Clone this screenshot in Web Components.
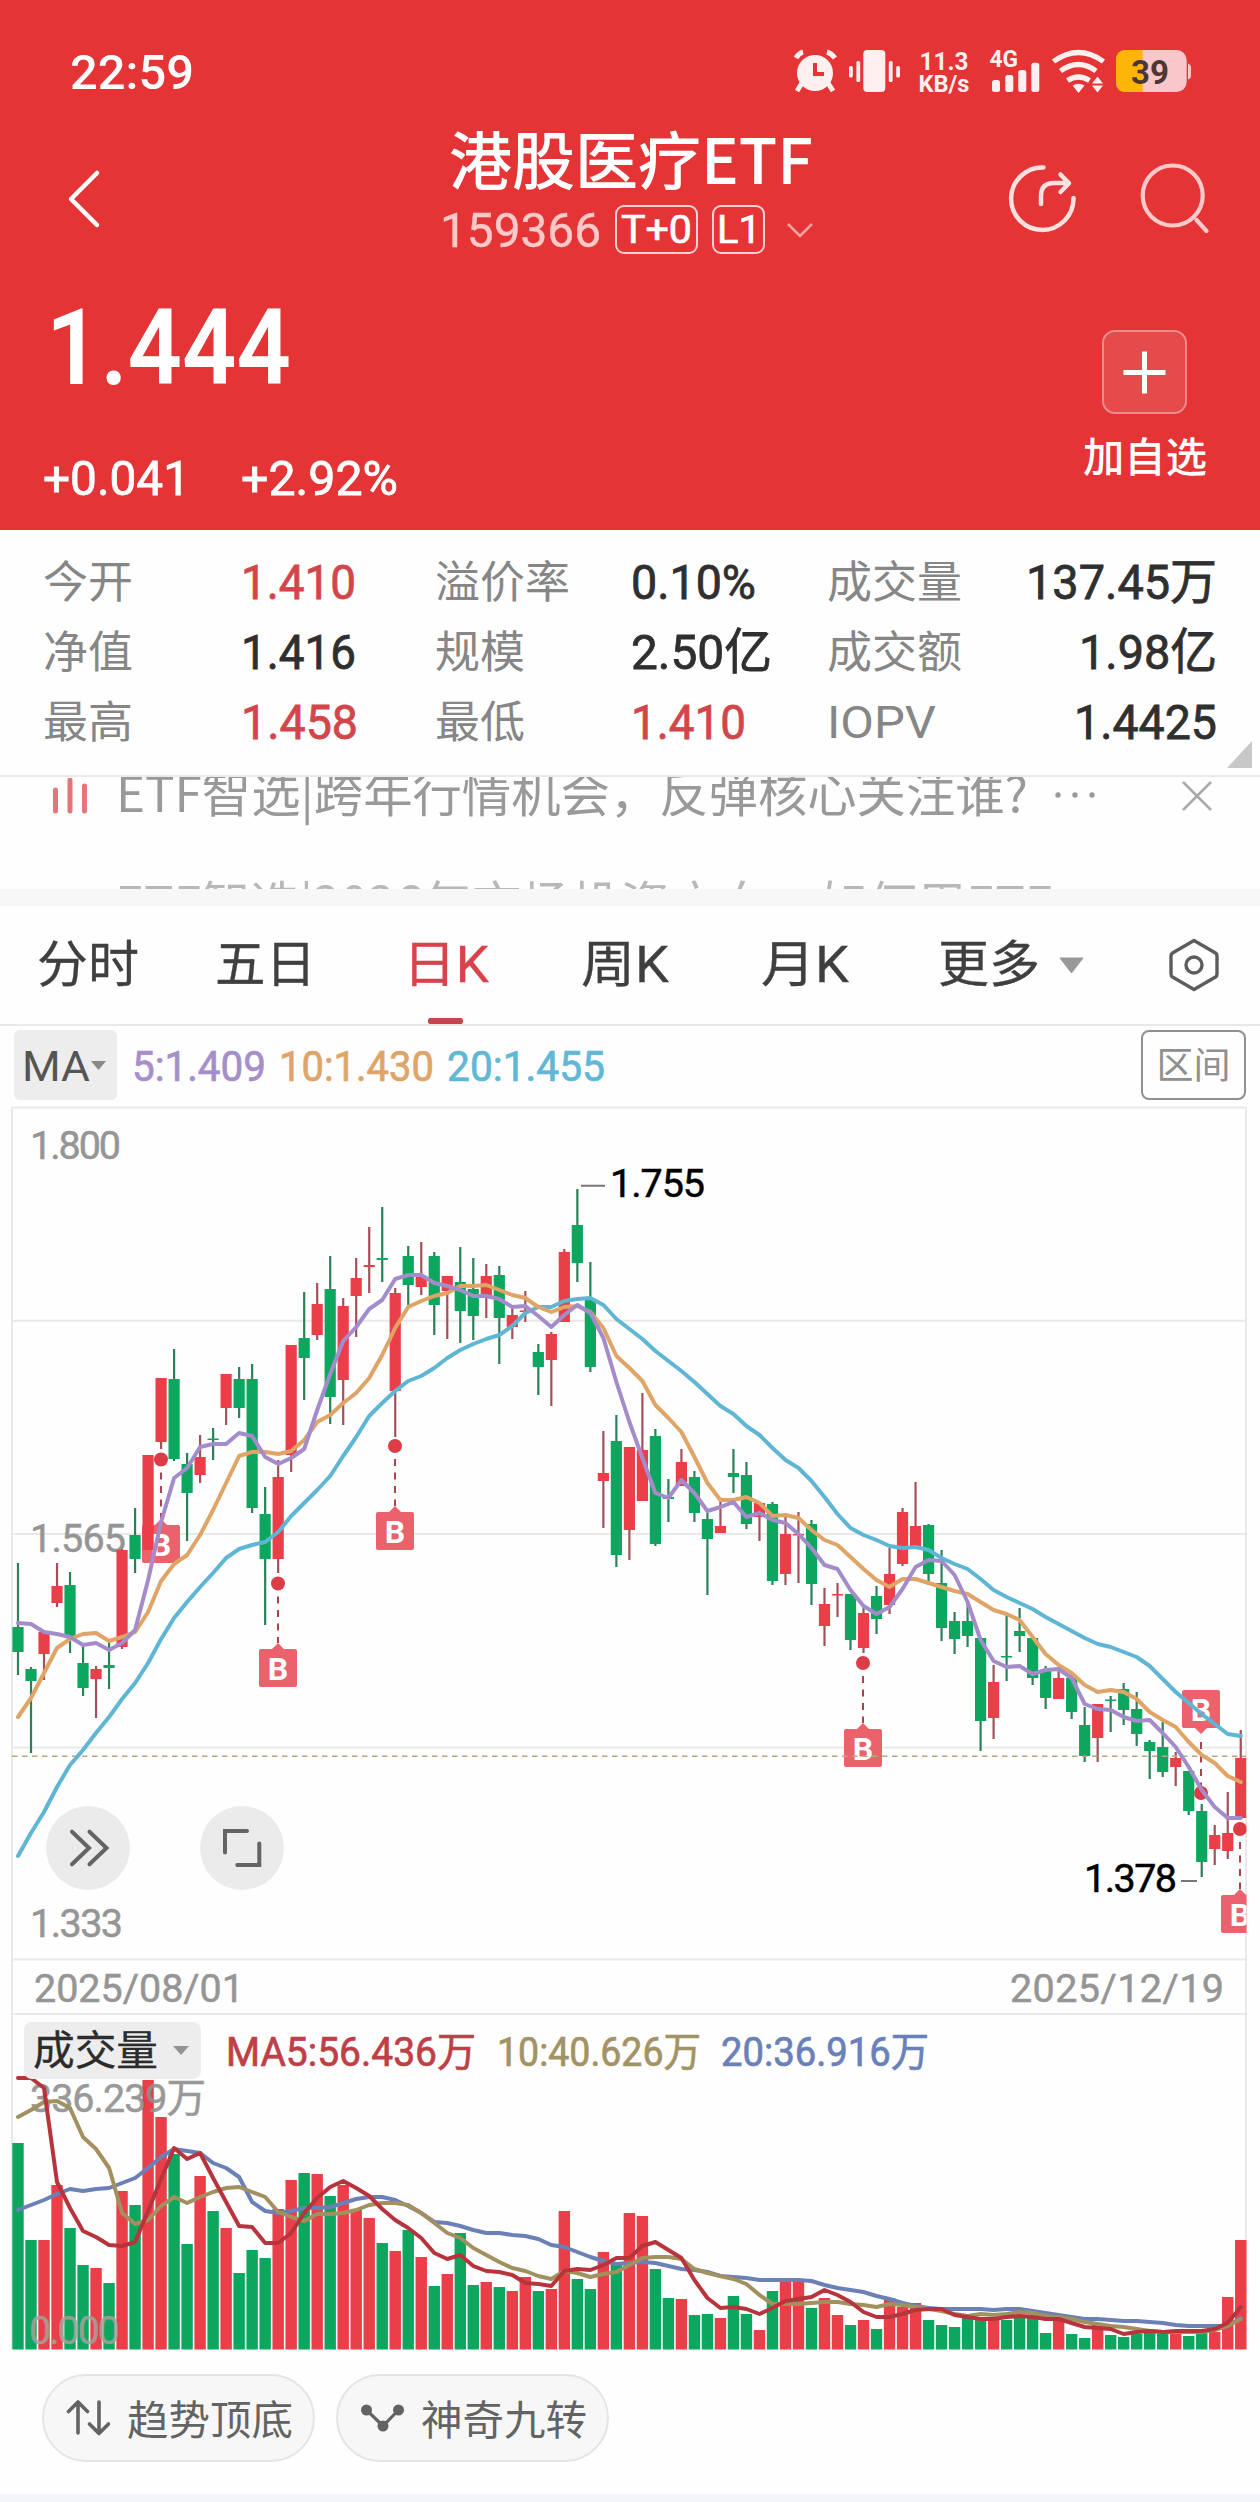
<!DOCTYPE html>
<html lang="zh-CN">
<head>
<meta charset="utf-8">
<title>港股医疗ETF 159366</title>
<style>
html,body{margin:0;padding:0}
body{width:1260px;height:2502px;overflow:hidden;background:#fefefe;font-family:Roboto,"Noto Sans CJK SC",sans-serif}
quote-page{--up:#ea3e48;--down:#0ca65f;--red:#d2464b;--ink:#2f2f2f;--mute:#868686;--line:#e9e9e9}
</style>
</head>
<body>
<quote-page></quote-page>
<script>
const define=(name,html,after)=>customElements.define(name,class extends HTMLElement{
  constructor(){super();this.attachShadow({mode:'open'});}
  connectedCallback(){this.shadowRoot.innerHTML=html;if(after)after.call(this,this.shadowRoot);}
});

/* One line of text scaled horizontally to the width given in "w". */
customElements.define('fit-text',class extends HTMLElement{
  constructor(){super();this.attachShadow({mode:'open'}).innerHTML=
   '<style>:host{display:block;flex:none;white-space:nowrap;text-align:left}span{display:inline-block;transform-origin:0 50%}</style><span><slot></slot></span>';}
  connectedCallback(){
    const w=+this.getAttribute('w'),s=this.shadowRoot.querySelector('span');
    this.style.width=w+'px';
    const n=s.getBoundingClientRect().width;
    if(n)s.style.transform='scaleX('+(w/n)+')';
  }
});

define('status-bar',`<style>
:host{display:flex;height:48px;padding-top:48px;color:#fff;align-items:center}
.t{font-size:49px;font-weight:500;line-height:48px;margin-left:70px;padding-top:2px}
svg{display:block;margin-left:auto}
</style>
<fit-text class="t" w="124">22:59</fit-text>
<svg width="360" height="48" viewBox="840 48 360 48" style="overflow:visible">
 <g fill="#fff0f0" stroke="none">
  <circle cx="815" cy="73" r="18"/>
  <path d="M802 83l-5 8M828 83l5 8" stroke="#fff0f0" stroke-width="5" fill="none"/>
  <path d="M796 58q3-5 7-6M827 52q4 1 8 6" stroke="#fff0f0" stroke-width="5" fill="none"/>
  <path d="M815 63v11h9" stroke="#e43435" stroke-width="4" fill="none"/>
  <rect x="863.3" y="50" width="22" height="42" rx="4"/>
  <rect x="856.4" y="61" width="3.8" height="21" rx="1.5"/><rect x="849" y="66" width="3.8" height="11.5" rx="1.5"/>
  <rect x="888.8" y="61" width="3.8" height="21" rx="1.5"/><rect x="896.2" y="66" width="3.8" height="11.5" rx="1.5"/>
  <text x="919.5" y="69.5" font-size="26.500" font-weight="700" textLength="49" lengthAdjust="spacingAndGlyphs">11.3</text>
  <text x="918.500" y="92.300" font-size="23" font-weight="700" textLength="51" lengthAdjust="spacingAndGlyphs">KB/s</text>
  <text x="989.500" y="67.300" font-size="23.500" font-weight="700" textLength="28.500" lengthAdjust="spacingAndGlyphs">4G</text>
  <rect x="992" y="80" width="8" height="12" rx="2.500"/><rect x="1005.300" y="75" width="8" height="17" rx="2.500"/><rect x="1018.300" y="70" width="8" height="22" rx="2.500"/><rect x="1031.300" y="62.700" width="8" height="29.300" rx="2.500"/>
  <path d="M1053.500 61.500Q1078.500 43.500 1103.500 61.500" stroke="#fff0f0" stroke-width="5.200" fill="none"/>
  <path d="M1060.500 71Q1078.500 58 1096 71" stroke="#fff0f0" stroke-width="5.200" fill="none"/>
  <path d="M1067.500 80.500Q1078.500 73.500 1089.500 80.500" stroke="#fff0f0" stroke-width="5.200" fill="none"/>
  <path d="M1072.500 85.500q6-3.500 12 0l-6 7.500zM1097.500 76.500l5.500 7h-11zM1092 85.500h11l-5.500 7z"/>
 </g>
 <rect x="1116" y="50" width="70.700" height="42" rx="10" fill="#f9c6c9"/>
 <path d="M1188 63.500q3 1 3 4v8q0 3-3 4z" fill="#f9c6c9"/>
 <path d="M1142.700 50h-16.700q-10 0-10 10v22q0 10 10 10h16.700z" fill="#fdb507"/>
 <text x="1131" y="83.500" font-size="33" font-weight="700" fill="#4b3833" textLength="38" lengthAdjust="spacingAndGlyphs">39</text>
</svg>
<span style="width:60px"></span>`);

define('quote-header',`<style>
:host{display:block;height:530px;background:#e43435;color:#fff}
nav{display:flex;height:140px;margin-top:24px}
nav svg{display:block;flex:none}
.mid{width:390px}
.title{font-family:"Noto Sans CJK SC",sans-serif;font-size:63px;font-weight:500;line-height:74px;margin:0 0 0 7px}
.code{display:flex;align-items:center;height:49px;margin-top:11px}
.num{font-size:49px;line-height:49px;color:#ffc9c9;padding-top:1px;-webkit-text-stroke:.4px}
.tag{box-sizing:border-box;border:2px solid #ffd3d3;border-radius:9px;height:49px;line-height:47px;font-size:39px;-webkit-text-stroke:.7px;display:flex;justify-content:center}
.body{display:flex;justify-content:space-between}
.price{font-size:106px;font-weight:600;line-height:120px;margin:28px 0 0 46px}
.chg{display:flex;gap:51px;margin:41px 0 0 43px;font-size:49px;-webkit-text-stroke:.8px;line-height:59px}
.add{width:125px;margin:70px 53px 0 0;display:flex;flex-direction:column;align-items:center}
.box{box-sizing:border-box;width:85px;height:84px;border:2px solid #ef8b8c;border-radius:13px;background:#e64b4c;display:block}
.add fit-text{font-size:41px;line-height:50px;margin-top:19px;font-weight:450}
</style>
<status-bar></status-bar>
<nav>
 <svg width="442" height="140" viewBox="0 120 442 140"><path d="M97 173L71 199l26 26" fill="none" stroke="#fff" stroke-width="4.500" stroke-linecap="round" stroke-linejoin="round"/></svg>
 <div class="mid">
  <fit-text class="title" w="364">港股医疗ETF</fit-text>
  <div class="code">
   <fit-text class="num" w="161" style="margin-left:-2px">159366</fit-text>
   <span class="tag" style="width:83px;margin-left:14px"><fit-text w="71">T+0</fit-text></span>
   <span class="tag" style="width:53px;margin-left:14px"><fit-text w="44">L1</fit-text></span>
   <svg width="28" height="16" style="margin-left:21px" viewBox="0 0 28 16"><path d="M2 2l12 12L26 2" fill="none" stroke="#f5a3a3" stroke-width="2.500"/></svg>
  </div>
 </div>
 <svg width="428" height="140" viewBox="832 120 428 140" fill="none" stroke-linecap="round" stroke-linejoin="round">
  <g stroke="#ffe0e0" stroke-width="4.500"><path d="M1043.500 167.500A31.200 31.200 0 1 0 1073.500 198"/><path d="M1041 204v-8q0-13 13-13h14M1060.500 174.500l8.500 8.800-8.500 8.700"/></g>
  <g stroke="#ffc9c9" stroke-width="4.200"><circle cx="1172.700" cy="195.500" r="30"/><path d="M1196.500 220l10 11"/></g>
 </svg>
</nav>
<div class="body">
 <div>
  <fit-text class="price" w="245">1.444</fit-text>
  <div class="chg"><fit-text w="147">+0.041</fit-text><fit-text w="157">+2.92%</fit-text></div>
 </div>
 <div class="add">
  <svg class="box" viewBox="2 2 81 80"><path d="M21.500 42.500h42M42.500 21.500v42" stroke="#fff" stroke-width="5"/></svg>
  <fit-text w="124">加自选</fit-text>
 </div>
</div>`);

define('quote-grid',`<style>
:host{display:grid;position:relative;box-sizing:border-box;height:247px;padding:18px 43px 0 43px;border-bottom:2px solid var(--line);
 grid-template-columns:198px 194px 196px 196px 133px 257px;grid-auto-rows:70px;align-items:center;line-height:70px;color:var(--ink)}
.l{font-size:44.500px;color:var(--mute)}
.v{font-size:49px;-webkit-text-stroke:.8px}
.r{color:var(--red)}
.e{justify-self:end}
svg{position:absolute;left:1227px;top:211px}
</style>
<fit-text class="l" w="90">今开</fit-text><fit-text class="v r" w="115" >1.410</fit-text><fit-text class="l" w="135">溢价率</fit-text><fit-text class="v" w="125">0.10%</fit-text><fit-text class="l" w="135">成交量</fit-text><fit-text class="v e" w="191">137.45万</fit-text>
<fit-text class="l" w="90">净值</fit-text><fit-text class="v" w="115">1.416</fit-text><fit-text class="l" w="90">规模</fit-text><fit-text class="v" w="141">2.50亿</fit-text><fit-text class="l" w="135">成交额</fit-text><fit-text class="v e" w="138">1.98亿</fit-text>
<fit-text class="l" w="90">最高</fit-text><fit-text class="v r" w="117">1.458</fit-text><fit-text class="l" w="90">最低</fit-text><fit-text class="v r" w="115">1.410</fit-text><fit-text class="l" w="109">IOPV</fit-text><fit-text class="v e" w="143">1.4425</fit-text>
<svg width="26" height="27"><path d="M25 0v27H0z" fill="#c8c8c8"/></svg>`);

define('news-strip',`<style>
:host{display:block;height:112px;overflow:hidden;color:#999}
.row{display:flex;align-items:center;height:109px;font-family:"Noto Sans CJK SC",sans-serif;font-size:48.500px;line-height:101px}
.row.a{margin-top:-36px}
.row.b{color:#b8b8b8;margin-top:1px}
.row fit-text{align-self:flex-start}
svg{flex:none}
</style>
<div class="row a">
 <svg width="36" height="36" style="margin-left:52px" viewBox="52 778 36 36"><path d="M55.500 790v21M70 780v31M84.500 786v25" stroke="#e4767a" stroke-width="5" stroke-linecap="round"/></svg>
 <fit-text w="912" style="margin-left:28px">ETF智选|跨年行情机会，反弹核心关注谁?</fit-text>
 <svg width="42" height="8" style="margin-left:26px;margin-top:-2px" viewBox="0 0 42 8" fill="#999"><circle cx="4" cy="4" r="2.700"/><circle cx="21" cy="4" r="2.700"/><circle cx="38" cy="4" r="2.700"/></svg>
 <svg width="32" height="32" style="margin-left:85px" viewBox="0 0 32 32"><path d="M2 2l28 28M30 2L2 30" stroke="#aaa" stroke-width="2.500"/></svg>
</div>
<div class="row b"><fit-text w="937" style="margin-left:115px">ETF智选|2026年市场投资方向，如何用ETF</fit-text></div>`);

define('period-tabs',`<style>
:host{display:flex;align-items:center;height:118px;margin-top:17px;border-bottom:2px solid var(--line);font-size:50.500px;line-height:122px;color:#3f3f3f;-webkit-text-stroke:.3px;box-shadow:0 -17px #f7f7f7}
.on{position:relative;color:#d7434b}
.on::after{content:"";position:absolute;left:25px;bottom:2px;width:35px;height:6px;border-radius:2px;background:#c5474d}
svg{flex:none}
</style>
<fit-text w="102" style="margin-left:37px">分时</fit-text>
<fit-text w="101" style="margin-left:76px">五日</fit-text>
<fit-text w="86" class="on" style="margin-left:87px">日K</fit-text>
<fit-text w="88" style="margin-left:92px">周K</fit-text>
<fit-text w="88" style="margin-left:92px">月K</fit-text>
<fit-text w="102" style="margin-left:89px">更多</fit-text>
<svg width="25" height="17" style="margin-left:19px"><path d="M1 1h23L12.500 16z" fill="#999" stroke="#999" stroke-linejoin="round"/></svg>
<svg width="50" height="54" style="margin-left:85px" viewBox="0 0 50 54" fill="none" stroke="#5c5c5c" stroke-width="3.400" stroke-linejoin="round"><path d="M25 2.500L46.500 15q1.500 1 1.500 3v18q0 2-1.500 3L25 51.500 3.500 39Q2 38 2 36V18q0-2 1.500-3z"/><circle cx="25" cy="27" r="8"/></svg>`);

define('ma-legend',`<style>
:host{display:flex;align-items:center;height:78px;box-sizing:border-box;padding:4px 14px 4px;font-size:42.500px;line-height:70px}
.ma{display:flex;align-items:center;width:103px;height:70px;border-radius:6px;background:#ededed;color:#555}
.q{margin-left:auto;box-sizing:border-box;width:105px;height:70px;border:2px solid #909090;border-radius:8px;color:#8f8f8f;font-size:37px;line-height:69px;display:flex;justify-content:center}
.v,.ma fit-text{padding-top:3px}
.v{-webkit-text-stroke:.7px}
</style>
<span class="ma"><fit-text w="68" style="margin-left:8px">MA</fit-text><svg width="17" height="11"><path d="M1 1h15l-7.500 9z" fill="#888"/></svg></span>
<fit-text class="v" w="134" style="margin-left:15px;color:#a58fcb">5:1.409</fit-text>
<fit-text class="v" w="155" style="margin-left:13px;color:#e0a468">10:1.430</fit-text>
<fit-text class="v" w="158" style="margin-left:13px;color:#60b7d6">20:1.455</fit-text>
<span class="q"><fit-text w="74">区间</fit-text></span>`);

const X=i=>18+i*13.008;
const UP='#ea3e48',DN='#0ca65f',UPW='#a4505a',DNW='#2c8058';
/* colour, high, body top, body bottom, low */
const K=`g1563,1627,1652,1675 g1667,1669,1681,1753 r1632,1632,1654,1680 r1563,1586,1603,1607 g1572,1585,1637,1653 g1645,1663,1688,1696 r1666,1669,1679,1718 g1642,1665,1668,1689 r1549,1550,1647,1649 g1508,1535,1559,1573 r1455,1455,1550,1550 r1378,1378,1442,1449 g1349,1379,1459,1461 g1453,1464,1493,1541 r1435,1457,1475,1483 g1428,1438.500,1440,1460 r1374,1374,1408,1425 g1367,1379,1408,1418 g1364,1379,1508,1513 g1487,1514,1559,1625
r1460,1477,1559,1573 r1345,1345,1455,1472 g1292,1338,1358,1400 r1283,1304,1335,1340 g1256,1289,1397,1424 r1298,1306,1380,1425 r1258,1278,1296,1337 r1227,1265,1267,1293 g1207,1258,1260,1282 r1288,1293,1391,1437 g1246,1256,1285,1305 r1242,1276,1287,1295 g1252,1256,1305,1335 r1276,1276,1291,1339 g1247,1282,1311,1343 g1258,1289,1316,1340 r1264,1276,1297,1318 g1266,1275,1318,1364 r1308,1315,1327,1339 r1291,1310.500,1312,1322
g1344,1352,1367,1395 r1332,1334,1360,1406 r1249,1252,1322,1322 g1189,1225,1263,1282 g1262,1300,1367,1372 r1431,1473,1481,1528 g1415,1441,1555,1567 r1447,1447,1530,1560 r1393,1450,1501,1501 g1429,1436,1544,1546 g1479,1497,1499,1522 r1449,1462,1486,1486 g1471,1477,1513,1522 g1513,1519,1539,1595 r1500,1526,1533,1533 g1449,1473,1477,1493 g1462,1475,1524,1529 r1503,1503,1517,1541 g1502,1504,1581,1585 r1517,1534,1574,1585
r1512,1534,1535.500,1583 g1520,1524,1584,1605 r1588,1604,1626,1646 r1583,1594,1595.500,1617 g1594,1594,1640,1650 r1608,1613,1648,1653 g1586,1596,1619,1634 r1548,1574,1605,1614 r1508,1512,1564,1566 r1482,1526,1547,1547 g1524,1525,1574,1585 g1550,1583,1628,1641 g1612,1621,1639,1654 g1602,1621,1636,1647 g1638,1638,1721,1751 r1665,1682,1718,1739 g1614,1656,1657.500,1681 g1608,1631,1636,1652 g1638,1638,1678,1685 g1666,1671,1698,1709
r1670,1678,1699,1699 g1675,1678,1712,1719 g1707,1725,1756,1762 r1704,1704,1738,1762 g1696,1699.500,1701,1732 g1683,1689,1710,1725 g1692,1709,1734,1746 g1740,1742,1751,1779 g1722,1747,1772,1777 r1752,1758,1767,1786 g1771,1771,1811,1815 g1804,1811,1862,1877 r1825,1835,1849,1865 r1792,1833,1851,1859 r1730,1758,1818,1818`.split(/\s+/).map(s=>[s[0],...s.slice(1).split(',').map(Number)]);
const nums=s=>s.trim().split(/\s+/).map(Number);
const M5=nums(`1623 1624 1632 1634 1637 1645 1643 1650 1643 1630 1580 1522 1478 1468 1447 1444 1444 1433 1436 1457 1464 1458 1449 1410 1374 1341 1327 1309 1300 1279 1275 1275 1283 1286 1290 1296 1296 1299 1307 1306 1316 1327 1315 1305 1313 1338 1382 1422 1458 1493 1498 1480 1493 1511 1507 1502 1517 1513 1520 1523 1534 1548 1565 1569 1590 1606 1614 1607 1589 1567 1560 1561 1575 1602 1640 1661 1667 1666 1674 1670 1669 1678 1704 1709 1710 1717 1721 1720 1733 1747 1767 1790 1807 1818 1818`);
const M10=nums(`1717 1698 1673 1648 1639 1634 1633 1641 1637 1632 1612 1581 1564 1555 1535 1510 1483 1456 1452 1452 1454 1451 1440 1422 1415 1403 1393 1378 1355 1328 1307 1301 1296 1293 1286 1286 1285 1290 1295 1298 1307 1312 1307 1306 1312 1328 1356 1368 1381 1405 1418 1432 1457 1483 1500 1500 1497 1503 1516 1515 1518 1530 1540 1545 1557 1569 1580 1587 1579 1579 1583 1587 1591 1594 1602 1610 1614 1620 1637 1654 1665 1673 1685 1692 1690 1692 1699 1712 1720 1727 1742 1755 1763 1776 1782`);
const M20=nums(`1856 1833 1812 1787 1765 1750 1733 1717 1699 1683 1663 1639 1618 1602 1587 1573 1558 1549 1545 1542 1532 1516 1503 1490 1476 1456 1437 1416 1403 1391 1381 1376 1368 1358 1350 1344 1339 1335 1326 1313 1307 1307 1301 1299 1298 1305 1319 1329 1339 1351 1361 1371 1382 1394 1406 1414 1426 1435 1448 1460 1468 1481 1497 1514 1528 1535 1540 1546 1548 1547 1550 1558 1564 1569 1579 1590 1597 1603 1609 1617 1624 1631 1638 1644 1647 1652 1657 1666 1679 1692 1703 1714 1724 1734 1736`);
const VOL=nums(`2143 2240 2240 2185 2228 2265 2268 2283 2191 2205 2080 2117 2154 2244 2176 2211 2228 2273 2250 2258 2209 2180 2173 2174 2196 2185 2210 2218 2243 2251 2230 2257 2286 2274 2233 2285 2282 2287 2291 2277 2291 2289 2211 2279 2289 2252 2263 2213 2216 2269 2298 2299 2315 2314 2318 2296 2314 2330 2291 2282 2282 2308 2298 2315 2325 2320 2329 2298 2307 2303 2320 2325 2327 2318 2318 2320 2320 2315 2317 2333 2318 2334 2338 2325 2335 2337 2334 2332 2334 2330 2336 2333 2332 2297 2240`);
const V5=nums(`2078 2078 2088 2182 2208 2231 2237 2245 2246 2242 2211 2179 2148 2159 2153 2178 2202 2226 2227 2243 2243 2233 2213 2198 2187 2181 2188 2196 2209 2220 2228 2238 2253 2259 2255 2266 2271 2272 2275 2283 2284 2286 2271 2269 2270 2265 2258 2258 2246 2242 2250 2258 2280 2298 2308 2307 2309 2314 2308 2301 2299 2297 2290 2295 2302 2312 2317 2317 2314 2310 2309 2309 2315 2317 2319 2319 2317 2316 2317 2319 2319 2323 2327 2328 2329 2334 2332 2331 2332 2331 2331 2331 2329 2323 2307`);
const V10=nums(`2117 2110 2102 2101 2108 2137 2149 2168 2213 2224 2220 2206 2197 2203 2197 2192 2188 2187 2192 2197 2212 2217 2221 2214 2214 2213 2210 2205 2203 2203 2205 2213 2223 2233 2238 2248 2255 2262 2268 2271 2276 2279 2271 2273 2277 2274 2272 2265 2258 2257 2257 2259 2269 2273 2276 2279 2284 2295 2304 2304 2304 2303 2302 2302 2304 2305 2307 2304 2305 2307 2309 2311 2314 2316 2314 2315 2314 2312 2313 2316 2317 2319 2322 2324 2326 2327 2329 2331 2332 2332 2332 2332 2330 2326 2319`);
const V20=nums(`2210 2205 2200 2194 2189 2191 2189 2188 2183 2178 2168 2157 2149 2151 2153 2163 2168 2177 2202 2211 2213 2211 2208 2208 2207 2203 2199 2197 2197 2200 2206 2213 2222 2223 2226 2230 2233 2233 2235 2236 2239 2245 2247 2252 2257 2261 2264 2263 2262 2263 2266 2269 2270 2272 2276 2277 2278 2280 2280 2280 2280 2281 2285 2288 2290 2292 2296 2299 2303 2306 2308 2309 2309 2309 2309 2310 2309 2309 2311 2313 2315 2317 2319 2319 2320 2321 2321 2322 2323 2325 2326 2326 2326 2326 2318`);
const poly=(a,c,w=4)=>`<polyline fill="none" stroke="${c}" stroke-width="${w}" stroke-linejoin="round" stroke-linecap="round" points="${a.map((y,i)=>X(i).toFixed(1)+','+y).join(' ')}"/>`;
const label=(x,y,w,t,fill='#959595',extra='')=>`<text x="${x}" y="${y}" font-size="39.500" fill="${fill}" stroke="${fill}" stroke-width=".5" textLength="${w}" ${extra}>${t}</text>`;

/* buy marker: anchor dot, dashed leader, tag below (or above with up=true) */
const buy=(x,dy,ty,up)=>{
  const tip=up?`M${x-6} ${ty+38}l6 6 6-6z`:`M${x-6} ${ty}l6-6 6 6z`;
  const y1=up?ty+52:dy+13,y2=up?dy:ty-6;
  return `<path d="M${x} ${y1}V${y2}" stroke="#a8444e" stroke-width="2" stroke-dasharray="7 6.500"/>
  <circle cx="${x}" cy="${dy}" r="7" fill="#dc3c46"/>
  <rect x="${x-19}" y="${ty}" width="38" height="38" rx="2" fill="#eb626c"/><path d="${tip}" fill="#eb626c"/>
  <text x="${x}" y="${ty+30.500}" font-size="32" font-weight="700" fill="#fff" text-anchor="middle">B</text>`;
};

define('k-chart',`<style>
:host{display:block;position:relative;height:911px}
svg{display:block}
button{position:absolute;top:702px;width:84px;height:84px;border:0;border-radius:50%;background:#ebebeb;padding:0}
</style><div id="c"></div>
<button style="left:46px"><svg width="84" height="84" viewBox="46 1806 84 84" fill="none" stroke="#646464" stroke-width="4" stroke-linecap="round"><path d="M72 1831.700L89 1848l-17 16.300M89.500 1831.700l17 16.300-17 16.300"/></svg></button>
<button style="left:200px"><svg width="84" height="84" viewBox="200 1806 84 84" fill="none" stroke="#646464" stroke-width="4" stroke-linecap="round"><path d="M225 1852.500V1831h22M259.300 1843.500V1865h-22"/></svg></button>`,function(r){
  let s='<svg width="1260" height="911" viewBox="0 1104 1260 911"><defs><clipPath id="p"><rect x="12" y="1107" width="1234.500" height="852"/></clipPath></defs><g stroke="#e9e9e9" stroke-width="2" fill="none"><path d="M12 1107.500H1246M12 1320.700H1246M12 1534H1246M12 1747.500H1246M12 1959.500H1246M12 2014H1246M12 1107V2015M1246 1107V2015"/></g>';
  s+=label(30,1159,91,'1.800')+label(30,1552,96,'1.565')+label(30,1937,93,'1.333');
  s+='<g clip-path="url(#p)">';
  s+=buy(161,1459.5,1525)+buy(278,1583.5,1649)+buy(395,1446,1512)+buy(863,1663,1729)+buy(1201,1793,1690,true)+buy(1240,1829,1895);
  K.forEach((k,i)=>{const x=X(i),u=k[0]==='r';
    s+=`<path d="M${x} ${k[1]}V${k[4]}" stroke="${u?UPW:DNW}" stroke-width="2.2"/><rect x="${x-5.6}" y="${k[2]}" width="11.200" height="${k[3]-k[2]}" fill="${u?UP:DN}"/>`;});
  s+='<path d="M12 1756.300H1246" stroke="#b3ab7c" stroke-width="1.600" stroke-dasharray="5.500 4.500"/>';
  s+=poly(M20,'#5fb6d4')+poly(M10,'#dfa466')+poly(M5,'#a48ccb')+'</g>';
  s+='<path d="M581 1185.700h24M1181 1881h16" stroke="#777" stroke-width="2"/>';
  s+=label(610,1197,95,'1.755','#000')+label(1084,1892,93,'1.378','#000');
  s+=label(34,2002,210,'2025/08/01')+label(1010,2002,214,'2025/12/19')+'</svg>';
  r.getElementById('c').innerHTML=s;
});

define('volume-chart',`<style>
:host{display:block}
.head{display:flex;align-items:center;height:57px;padding:7px 0 0 24px;font-size:40px;line-height:57px;position:relative}
.head>fit-text{padding-top:4px;-webkit-text-stroke:.7px}
.sel{display:flex;align-items:center;width:177px;height:57px;border-radius:8px;background:#ededed;color:#2c2c2c;font-size:41px;-webkit-text-stroke:.3px;line-height:62px}
svg{display:block;overflow:visible}
</style>
<div class="head"><span class="sel"><fit-text w="125" style="margin-left:9px">成交量</fit-text><svg width="18" height="11" style="margin-left:14px"><path d="M1 1h16L9 10z" fill="#949494"/></svg></span>
<fit-text w="250" style="margin-left:25px;color:#bf3f47">MA5:56.436万</fit-text>
<fit-text w="204" style="margin-left:21px;color:#a39264">10:40.626万</fit-text>
<fit-text w="208" style="margin-left:20px;color:#6a80b9">20:36.916万</fit-text></div>
<div id="c"></div>`,function(r){
  let s='<svg width="1260" height="271" viewBox="0 2079 1260 271"><path d="M12 2015V2349M1246 2015V2349" stroke="#e9e9e9" stroke-width="2"/>';
  VOL.forEach((y,i)=>{s+=`<rect x="${X(i)-5.7}" y="${y}" width="11.400" height="${2349.5-y}" fill="${K[i][0]==='r'?UP:DN}"/>`;});
  s+=label(30,2112,176,'336.239万','#8f8f8f','opacity=".9"')+label(29,2344,91,'0.000','#a3a39b','opacity=".85"');
  s+=poly(V20,'#6c80b8')+poly(V10,'#a3905f')+poly(V5,'#b8343c')+'</svg>';
  r.getElementById('c').innerHTML=s;
});

define('tool-pill',`<style>
:host{display:flex;align-items:center;box-sizing:border-box;width:273px;height:88px;border:2px solid #e4e4e4;border-radius:44px;background:#f7f7f7;color:#636363;font-size:41px;line-height:84px;padding-left:22px}
::slotted(fit-text){padding-top:5px}
</style><slot name="icon"></slot><slot></slot>`);

define('tool-bar',`<style>
:host{display:flex;gap:21px;padding:24px 42px 32px;border-bottom:8px solid #f3f5fb}
</style>
<tool-pill><svg slot="icon" width="44" height="36" viewBox="66 2400 44 36" fill="none" stroke="#636363" stroke-width="3.600" stroke-linecap="round" stroke-linejoin="round"><path d="M78 2433v-30M68.500 2411.500l9.500-9.500 9.500 9.500M99 2402v31M89.500 2424l9.500 9.500 9.500-9.500"/></svg><fit-text w="166" style="margin-left:17px">趋势顶底</fit-text></tool-pill>
<tool-pill><svg slot="icon" width="46" height="36" viewBox="360 2400 46 36" fill="#636363"><path d="M366.500 2410l16.500 16 15.500-16" fill="none" stroke="#636363" stroke-width="3.200"/><circle cx="366.500" cy="2410" r="5.500"/><circle cx="398.500" cy="2410" r="5.500"/><circle cx="383" cy="2426" r="5.500"/></svg><fit-text w="166" style="margin-left:15px">神奇九转</fit-text></tool-pill>`);

define('quote-page',`<style>:host{display:block;width:1260px}</style>
<quote-header></quote-header><quote-grid></quote-grid><news-strip></news-strip><period-tabs></period-tabs><ma-legend></ma-legend><k-chart></k-chart><volume-chart></volume-chart><tool-bar></tool-bar>`);
</script>
</body>
</html>
